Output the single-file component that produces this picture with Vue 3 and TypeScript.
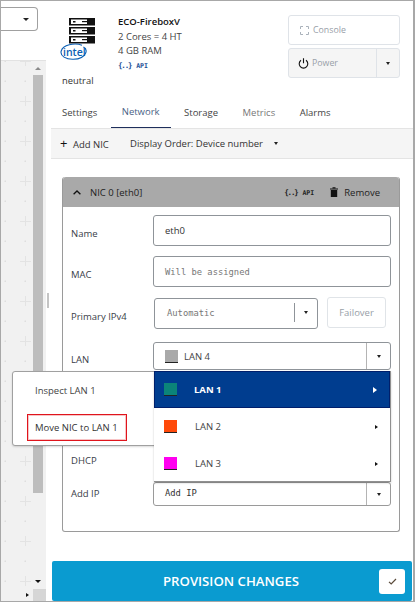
<script setup lang="ts">
const tabs = ["Settings", "Network", "Storage", "Metrics", "Alarms"];

const lans = [
	{ name: "LAN 1", color: "#0b8479", active: true },
	{ name: "LAN 2", color: "#ff4a0a", active: false },
	{ name: "LAN 3", color: "#ff00f0", active: false },
];
</script>

<template>
	<div class="page">
		<aside class="side">
			<div class="side-top">
				<div class="top-select"><span class="caret"></span></div>
			</div>
			<div class="canvas-wrap">
				<div class="canvas-row">
					<svg class="canvas" xmlns="http://www.w3.org/2000/svg">
						<defs>
							<pattern id="grid" width="40" height="40" patternUnits="userSpaceOnUse" patternTransform="translate(0 -1)">
								<rect x="3.5" y="0.5" width="1.5" height="1.5" fill="#dedede" />
								<rect x="3.5" y="20.5" width="1.5" height="1.5" fill="#dedede" />
								<rect x="23.5" y="20.5" width="1.5" height="1.5" fill="#dedede" />
								<rect x="24" y="0" width="1" height="6" fill="#e3e3e3" />
								<rect x="24" y="36" width="1" height="4" fill="#e3e3e3" />
								<rect x="19" y="1" width="11" height="1" fill="#e3e3e3" />
							</pattern>
						</defs>
						<rect width="100%" height="100%" fill="url(#grid)" />
					</svg>
					<div class="vscroll">
						<span class="arrow-up"></span>
						<div class="vthumb"></div>
						<span class="arrow-down"></span>
					</div>
					<div class="side-gap"></div>
				</div>
				<div class="hscroll">
					<span class="arrow-right"></span>
					<div class="hcorner"></div>
				</div>
			</div>
		</aside>

		<div class="splitter"><span class="handle"></span></div>

		<main class="main">
			<header class="head">
				<div class="logo">
					<svg class="server" width="28" height="26" viewBox="0 0 28 26">
						<g v-for="y in [0, 9, 18]" :key="y">
							<rect x="1" :y="y" width="26" height="7.5" fill="#111" />
							<rect x="3" :y="y + 1.5" width="16" height="4.5" fill="#fff" />
							<rect x="5" :y="y + 3" width="2.5" height="1.5" fill="#111" />
							<rect x="14" :y="y + 3" width="7" height="1.2" fill="#111" />
						</g>
					</svg>
					<svg class="intel" width="27" height="18" viewBox="0 0 27 18">
						<path d="M22 2.200C14 -0.500 3 2 1.200 8c-1.400 5 5 8.500 12 8.300 6-.2 11-2.600 12.600-6.600 .9-2.400-.4-4.600-2.400-5.600" fill="none" stroke="#0a5fb4" stroke-width="1.1" />
						<text x="3" y="12.500" class="intel-text">intel</text>
					</svg>
					<div class="neutral">neutral</div>
				</div>
				<div class="info">
					<div class="info-name">ECO-FireboxV</div>
					<div>2 Cores = 4 HT</div>
					<div>4 GB RAM</div>
					<div class="api"><span class="api-brace">{..}</span> API</div>
				</div>
				<div class="actions">
					<button class="btn console">
						<svg width="9" height="9" viewBox="0 0 9 9" fill="none" stroke="#aab2bb" stroke-width="1">
							<path d="M.5 3V.5H3M6 .5h2.500V3M8.500 6v2.500H6M3 8.500H.5V6" />
						</svg>
						Console
					</button>
					<div class="power">
						<div class="power-main">
							<svg width="11" height="11" viewBox="0 0 11 11" fill="none" stroke="#111" stroke-width="1.1">
								<path d="M3 2.300a4.300 4.300 0 1 0 5 0M5.500 .3v5" />
							</svg>
							Power
						</div>
						<div class="power-caret"><span class="caret small"></span></div>
					</div>
				</div>
			</header>

			<nav class="tabs">
				<span v-for="t in tabs" :key="t" class="tab" :class="{ current: t === 'Network', muted: t === 'Metrics' }">{{ t }}</span>
			</nav>

			<div class="toolbar">
				<span class="add"><span class="plus">+</span> Add NIC</span>
				<span class="order">Display Order: Device number</span>
				<span class="caret small"></span>
			</div>

			<section class="card">
				<div class="card-head">
					<svg width="8" height="5" viewBox="0 0 8 5" fill="none" stroke="#111" stroke-width="1.300"><path d="M.6 4.300 4 1l3.400 3.300" /></svg>
					<span class="card-title">NIC 0 [eth0]</span>
					<span class="api head-api"><span class="api-brace">{..}</span> API</span>
					<svg width="8" height="10" viewBox="0 0 8 10"><path d="M0 1.500h8v1H0zM2.500 .2h3v1h-3zM.8 3h6.400v7H.8z" fill="#111" /></svg>
					<span class="remove">Remove</span>
				</div>
				<div class="card-body">
					<div class="row row-name">
						<label>Name</label>
						<div class="input">eth0</div>
					</div>
					<div class="row row-mac">
						<label>MAC</label>
						<div class="input mono">Will be assigned</div>
					</div>
					<div class="row row-ip">
						<label>Primary IPv4</label>
						<div class="input mono combo">
							<span class="combo-text">Automatic</span>
							<span class="combo-btn"><span class="caret small"></span></span>
						</div>
						<button class="failover">Failover</button>
					</div>
					<div class="row row-lan">
						<label>LAN</label>
						<div class="input select">
							<span class="swatch grey"></span>
							<span class="combo-text">LAN 4</span>
							<span class="select-btn"><span class="caret small"></span></span>
						</div>
						<div class="ctx">
							<div class="ctx-item">Inspect LAN 1</div>
							<div class="ctx-item boxed">Move NIC to LAN 1</div>
						</div>
						<ul class="menu">
							<li v-for="l in lans" :key="l.name" class="menu-item" :class="{ active: l.active }">
								<span class="swatch" :style="{ background: l.color }"></span>
								<span class="menu-text">{{ l.name }}</span>
								<span class="arrow-right menu-arrow"></span>
							</li>
						</ul>
					</div>
					<div class="row row-dhcp"><label>DHCP</label></div>
					<div class="row row-add">
						<label>Add IP</label>
						<div class="input mono select add-ip">
							<span class="combo-text">Add IP</span>
							<span class="select-btn"><span class="caret small"></span></span>
						</div>
					</div>
				</div>
			</section>

			<div class="provision">
				<span class="provision-label">PROVISION CHANGES</span>
				<span class="check">
					<svg width="9" height="7" viewBox="0 0 9 7" fill="none" stroke="#5a4a3a" stroke-width="1.200"><path d="M1 3.800 3.200 6 8 1" /></svg>
				</span>
			</div>
		</main>
	</div>
</template>

<style>
html,
body {
	margin: 0;
	background: #fff;
}
</style>

<style scoped>
* {
	box-sizing: border-box;
}

.page {
	display: flex;
	width: 415px;
	height: 602px;
	overflow: hidden;
	border: 1px solid #a8a8a8;
	border-right-width: 2px;
	font-family: "Open Sans", "Liberation Sans", sans-serif;
	font-size: 9.5px;
	color: #333;
	background: #fff;
}

.caret {
	display: inline-block;
	width: 0;
	height: 0;
	border-left: 3px solid transparent;
	border-right: 3px solid transparent;
	border-top: 3px solid #222;
}

.caret.small {
	border-left-width: 2.5px;
	border-right-width: 2.5px;
}

/* left strip */
.side {
	display: flex;
	flex-direction: column;
	width: 45px;
	flex: none;
}

.side-top {
	height: 59px;
	padding-top: 6px;
}

.top-select {
	display: flex;
	align-items: center;
	justify-content: flex-end;
	width: 37px;
	height: 24px;
	padding-right: 8px;
	border: 1px solid #a0a0a0;
	border-left: 0;
	border-radius: 0 4px 4px 0;
}

.canvas-wrap {
	flex: 1;
	display: flex;
	flex-direction: column;
	min-height: 0;
	border-top: 1px solid #e2e2e2;
	background: #f1f1f1;
}

.canvas-row {
	flex: 1;
	display: flex;
	min-height: 0;
}

.canvas {
	display: block;
	width: 32px;
	height: 100%;
	flex: none;
}

.vscroll {
	display: flex;
	flex-direction: column;
	align-items: center;
	width: 10px;
	flex: none;
	padding-top: 6px;
}

.arrow-up {
	width: 0;
	height: 0;
	margin-bottom: 5px;
	border-left: 3px solid transparent;
	border-right: 3px solid transparent;
	border-bottom: 3px solid #8a8a8a;
}

.arrow-down {
	width: 0;
	height: 0;
	margin-top: auto;
	margin-bottom: 6px;
	border-left: 3px solid transparent;
	border-right: 3px solid transparent;
	border-top: 3px solid #111;
}

.vthumb {
	width: 100%;
	height: 418px;
	background: #bdbdbd;
}

.side-gap {
	flex: 1;
	background: #f1f1f1;
}

.hscroll {
	display: flex;
	align-items: center;
	justify-content: flex-end;
	height: 12px;
	flex: none;
}

.arrow-right {
	display: inline-block;
	width: 0;
	height: 0;
	border-top: 2.5px solid transparent;
	border-bottom: 2.5px solid transparent;
	border-left: 3px solid #111;
}

.hcorner {
	align-self: stretch;
	width: 13px;
	margin-left: 4px;
	background: #d6d6d6;
}

.splitter {
	display: flex;
	align-items: center;
	width: 5px;
	flex: none;
	padding-left: 1px;
}

.handle {
	width: 2px;
	height: 15px;
	margin-top: -2px;
	background: #c4c4c4;
}

/* right panel */
.main {
	flex: 1;
	display: flex;
	flex-direction: column;
	min-width: 0;
}

.head {
	display: flex;
	height: 99px;
	flex: none;
}

.logo {
	width: 67px;
	padding: 17px 0 0 17px;
}

.server {
	display: block;
}

.intel {
	display: block;
	margin: -1px 0 0 -8px;
}

.intel-text {
	font-family: "Open Sans", sans-serif;
	font-size: 10.5px;
	font-weight: 600;
	fill: #0a5fb4;
}

.neutral {
	margin: 13px 0 0 -6px;
	font-size: 9.4px;
	color: #333;
}

.info {
	flex: 1;
	padding-top: 14px;
	line-height: 14.5px;
	color: #444;
}

.info-name {
	font-weight: 600;
	color: #111;
}

.api {
	font-family: "DejaVu Sans Mono", monospace;
	font-size: 6.5px;
	font-weight: 700;
	color: #1c4f95;
}

.api-brace {
	font-size: 7.5px;
	letter-spacing: -1.2px;
	margin-right: 1px;
}

.actions {
	display: flex;
	flex-direction: column;
	gap: 3px;
	width: 112px;
	margin-right: 13px;
	padding-top: 14px;
	flex: none;
}

.btn,
.power {
	height: 30px;
	border: 1px solid #dfe3e8;
	border-radius: 3px;
	font: inherit;
	font-size: 8.8px;
	color: #98a0a8;
}

.btn {
	display: flex;
	align-items: center;
	gap: 4px;
	padding: 0 11px;
	background: #fff;
}

.power {
	display: flex;
	background: #f5f5f5;
}

.power-main {
	flex: 1;
	display: flex;
	align-items: center;
	gap: 3px;
	padding-left: 9px;
}

.power-caret {
	display: flex;
	align-items: center;
	justify-content: center;
	width: 23px;
	border-left: 1px solid #dfe3e8;
}

.tabs {
	display: flex;
	gap: 2.5px;
	height: 29px;
	flex: none;
	border-bottom: 1px solid #e4e4e4;
}

.tab {
	display: flex;
	align-items: center;
	height: 28px;
	padding: 0 11px 4px;
	color: #444;
}

.tab.current {
	color: #4a5f85;
	border-bottom: 1px solid #1e2f5c;
}

.tab.muted {
	color: #777;
}

.toolbar {
	display: flex;
	align-items: center;
	height: 30px;
	flex: none;
	padding-left: 9px;
	background: #f5f5f5;
	border-bottom: 1px solid #e4e4e4;
}

.add {
	width: 70px;
}

.plus {
	font-size: 13px;
	line-height: 1;
	color: #111;
	margin-right: 3px;
}

.order {
	margin-right: 11px;
}

.card {
	width: 338px;
	height: 355px;
	margin: 18px 0 0 11px;
	flex: none;
	border: 1px solid #9a9a9a;
	border-top: 0;
	border-radius: 3px;
}

.card-head {
	display: flex;
	align-items: center;
	height: 30px;
	padding: 0 19px 0 10px;
	background: #a9a9a9;
	border-radius: 3px 3px 0 0;
	color: #222;
}

.card-title {
	margin-left: 9px;
}

.head-api {
	margin-left: auto;
	margin-right: 16px;
	color: #222;
}

.remove {
	margin-left: 6px;
}

.card-body {
	display: flex;
	flex-direction: column;
	padding: 8px 0 0 8px;
}

.row {
	position: relative;
	display: flex;
}

.row label {
	width: 82px;
	flex: none;
	padding-top: 12px;
	color: #3a4048;
}

.row-mac {
	margin-top: 10px;
}

.row-ip {
	margin-top: 11px;
}

.row-lan {
	height: 28px;
	margin-top: 13px;
}

.row-lan label {
	padding-top: 11px;
}

.row-dhcp {
	height: 30px;
	margin-top: 72px;
}

.row-add {
	height: 24px;
	margin-top: 10px;
}

.row-add label {
	padding-top: 5px;
}

.input {
	display: flex;
	align-items: center;
	width: 238px;
	height: 31px;
	padding: 0 11px;
	border: 1px solid #8f9499;
	border-radius: 3px;
	background: #fff;
	color: #333;
}

.mono {
	font-family: "DejaVu Sans Mono", "Liberation Mono", monospace;
	font-size: 8.8px;
	color: #777;
}

.combo {
	width: 164px;
	margin-left: 1px;
	padding: 0 0 2px 12px;
}

.combo-text {
	flex: 1;
}

.combo-btn {
	display: flex;
	align-items: center;
	justify-content: center;
	width: 23px;
	height: 19px;
	border-left: 1px solid #8f9499;
}

.failover {
	width: 59px;
	height: 31px;
	margin: -1px 0 0 9px;
	border: 1px solid #e0e4e8;
	border-radius: 3px;
	background: #fff;
	font: inherit;
	color: #98a0a8;
}

.select {
	height: 28px;
	padding: 0 0 0 11px;
}

.select .combo-text {
	margin-left: 6px;
	color: #444;
}

.select-btn {
	display: flex;
	align-items: center;
	justify-content: center;
	align-self: stretch;
	width: 24px;
	border-left: 1px solid #b4b4b4;
}

.add-ip {
	height: 24px;
	border-color: #9a9a9a;
}

.add-ip .combo-text {
	margin-left: 0;
	padding-bottom: 3px;
	color: #333;
}

.swatch {
	display: block;
	width: 13px;
	height: 13px;
	flex: none;
	border-bottom: 1px solid #222;
}

.swatch.grey {
	background: #a9a9a9;
}

/* overlays */
.ctx {
	position: absolute;
	top: 29px;
	left: -59px;
	z-index: 2;
	width: 144px;
	height: 75px;
	padding: 5px 0 0 14px;
	border: 1px solid #a0a0a0;
	border-radius: 3px 0 0 3px;
	background: #fff;
	color: #444;
	box-shadow: 0 1px 2px rgba(0, 0, 0, 0.15);
}

.ctx-item {
	display: flex;
	align-items: center;
	width: 100px;
	height: 27px;
	padding-left: 8px;
	white-space: nowrap;
}

.ctx-item.boxed {
	margin-top: 10px;
	padding-left: 7px;
	border: 1px solid #e0141c;
	box-shadow: inset 0 0 0 1px rgba(224, 20, 28, 0.25);
	color: #333;
}

.menu {
	position: absolute;
	top: 29px;
	left: 83px;
	z-index: 3;
	width: 237px;
	height: 111px;
	margin: 0;
	padding: 0;
	list-style: none;
	border-bottom: 1px solid #909090;
	border-right: 1px solid #909090;
	background: #fff;
	box-shadow: 0 1px 2px rgba(0, 0, 0, 0.2);
}

.menu-item {
	display: flex;
	align-items: center;
	height: 37px;
	padding: 0 12px 0 10px;
	color: #444;
}

.menu-item.active {
	padding-left: 9px;
	background: #003d8f;
	border: 1px solid #001f6b;
	color: #fff;
	font-weight: 700;
}

.menu-text {
	flex: 1;
	margin-left: 18px;
}

.menu-item.active .menu-text {
	margin-left: 17px;
}

.menu-item.active .menu-arrow {
	border-left: 4px solid #fff;
	border-top-width: 3px;
	border-bottom-width: 3px;
}

.provision {
	position: relative;
	display: flex;
	align-items: center;
	justify-content: center;
	width: 360px;
	height: 40px;
	margin: 29px 0 0 1px;
	flex: none;
	border-radius: 2px;
	background: #0a9bd0;
	color: #fff;
	font-size: 13.2px;
	font-weight: 600;
}

.provision-label {
	margin-left: -2px;
}

.check {
	position: absolute;
	top: 8px;
	right: 7px;
	display: flex;
	align-items: center;
	justify-content: center;
	width: 26px;
	height: 25px;
	border-radius: 3px;
	background: #fff;
}
</style>
